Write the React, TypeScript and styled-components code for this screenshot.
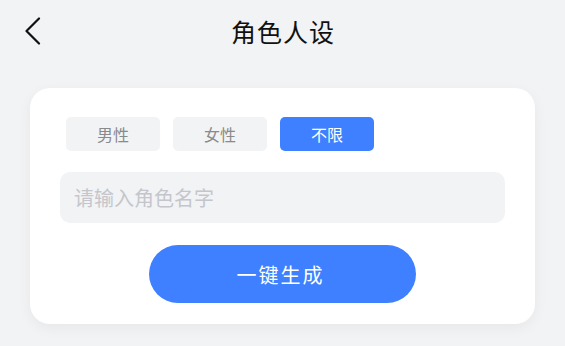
import { useState } from 'react';
import styled, { createGlobalStyle } from 'styled-components';

const GlobalStyle = createGlobalStyle`
  html, body {
    margin: 0;
    padding: 0;
    background: #f2f3f5;
    font-family: "Noto Sans CJK SC", "Noto Sans", sans-serif;
  }
  * {
    box-sizing: border-box;
  }
`;

const genders = ['男性', '女性', '不限'];

const App: React.FC = () => {
  const [gender, setGender] = useState('不限');
  const [name, setName] = useState('');

  return (
    <>
      <GlobalStyle />
      <Page>
        <Header>
          <BackBtn aria-label="back">
            <svg width="18" height="28" viewBox="0 0 18 28" fill="none">
              <path
                d="M15 1.5L2.5 14L15 26.5"
                stroke="#111"
                strokeWidth="2.2"
                strokeLinecap="round"
                strokeLinejoin="round"
              />
            </svg>
          </BackBtn>
          <Title>角色人设</Title>
        </Header>
        <Card>
          <ChipRow>
            {genders.map((g) => (
              <Chip key={g} $active={gender === g} onClick={() => setGender(g)}>
                {g}
              </Chip>
            ))}
          </ChipRow>
          <NameInput
            value={name}
            onChange={(e) => setName(e.target.value)}
            placeholder="请输入角色名字"
          />
          <GenerateBtn>一键生成</GenerateBtn>
        </Card>
      </Page>
    </>
  );
};

const Page = styled.div`
  width: 565px;
  min-height: 346px;
  background: #f2f3f5;
`;

const Header = styled.div`
  position: relative;
  height: 62px;
  display: flex;
  align-items: center;
  justify-content: center;
`;

const BackBtn = styled.button`
  position: absolute;
  left: 24px;
  top: 17px;
  padding: 0;
  border: none;
  background: transparent;
  display: flex;
  cursor: pointer;
`;

const Title = styled.h1`
  margin: 0;
  font-size: 25px;
  font-weight: 400;
  color: #111;
  letter-spacing: 1px;
  line-height: 1;
  padding-left: 1px;
`;

const Card = styled.div`
  width: 505px;
  margin: 26px auto 0;
  background: #fff;
  border-radius: 20px;
  padding: 29px 30px 21px;
  box-shadow: 0 4px 14px rgba(0, 0, 0, 0.05);
  display: flex;
  flex-direction: column;
  align-items: center;
`;

const ChipRow = styled.div`
  align-self: stretch;
  display: flex;
  gap: 13px;
  padding-left: 6px;
`;

const Chip = styled.button<{ $active?: boolean }>`
  width: 94px;
  height: 34px;
  border: none;
  border-radius: 5px;
  background: ${(p) => (p.$active ? '#3e80ff' : '#f2f3f5')};
  color: ${(p) => (p.$active ? '#fff' : '#8a8a8a')};
  font-family: inherit;
  font-size: 16px;
  cursor: pointer;
  padding: 0;
`;

const NameInput = styled.input`
  align-self: stretch;
  margin-top: 21px;
  height: 51px;
  border: none;
  border-radius: 10px;
  background: #f2f3f5;
  padding: 0 14px;
  font-family: inherit;
  font-size: 20px;
  color: #333;
  outline: none;

  &::placeholder {
    color: #c4c6cc;
  }
`;

const GenerateBtn = styled.button`
  margin-top: 22px;
  width: 267px;
  height: 58px;
  border: none;
  border-radius: 29px;
  background: #3e80ff;
  color: #fff;
  font-family: inherit;
  font-size: 20px;
  letter-spacing: 2px;
  padding-left: 2px;
  cursor: pointer;
`;

export default App;
